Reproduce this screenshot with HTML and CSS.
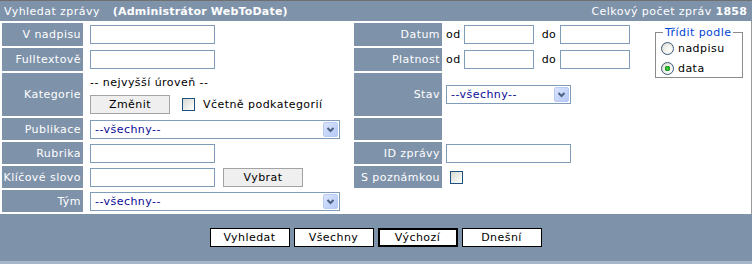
FILE: index.html
```html
<!DOCTYPE html>
<html lang="cs">
<head>
<meta charset="utf-8">
<title>Vyhledat zprávy</title>
<link rel="stylesheet" href="styles.css">
</head>
<body>
<div class="panel">
  <div class="head">
    <div class="head-title">Vyhledat zprávy<b class="head-user">(Administrátor WebToDate)</b></div>
    <div class="head-count">Celkový počet zpráv <b>1858</b></div>
  </div>
  <form class="grid">
    <div class="lbl">V nadpisu</div>
    <div class="cell"><input class="txt w125" type="text"></div>
    <div class="lbl">Datum</div>
    <div class="cell cell-r">od<input class="txt w70 od" type="text"><span class="do">do</span><input class="txt w70 od2" type="text"></div>
    <fieldset class="sort">
      <legend>Třídit podle</legend>
      <label class="opt"><input class="rad" type="radio" name="sort">nadpisu</label>
      <label class="opt"><input class="rad" type="radio" name="sort" checked>data</label>
    </fieldset>

    <div class="lbl">Fulltextově</div>
    <div class="cell"><input class="txt w125" type="text"></div>
    <div class="lbl">Platnost</div>
    <div class="cell cell-r">od<input class="txt w70 od" type="text"><span class="do">do</span><input class="txt w70 od2" type="text"></div>

    <div class="lbl">Kategorie</div>
    <div class="cell cell-kat">
      <div class="lvl">-- nejvyšší úroveň --</div>
      <div class="katrow">
        <button type="button" class="btn">Změnit</button>
        <label class="incl"><input class="chk" type="checkbox">Včetně podkategorií</label>
      </div>
    </div>
    <div class="lbl">Stav</div>
    <div class="cell cell-r"><select class="sel w125"><option>--všechny--</option></select></div>

    <div class="lbl">Publikace</div>
    <div class="cell"><select class="sel w250"><option>--všechny--</option></select></div>
    <div class="lbl"></div>
    <div class="cell cell-r wide"></div>

    <div class="lbl">Rubrika</div>
    <div class="cell"><input class="txt w125" type="text"></div>
    <div class="lbl">ID zprávy</div>
    <div class="cell cell-r wide"><input class="txt w125" type="text"></div>

    <div class="lbl">Klíčové slovo</div>
    <div class="cell"><input class="txt w125" type="text"><button type="button" class="btn pick">Vybrat</button></div>
    <div class="lbl">S poznámkou</div>
    <div class="cell cell-r wide"><input class="chk note" type="checkbox"></div>

    <div class="lbl">Tým</div>
    <div class="cell"><select class="sel w250"><option>--všechny--</option></select></div>
  </form>
  <div class="foot">
    <button type="button" class="fbtn">Vyhledat</button>
    <button type="button" class="fbtn">Všechny</button>
    <button type="button" class="fbtn fbtn-def">Výchozí</button>
    <button type="button" class="fbtn">Dnešní</button>
  </div>
  <div class="strip"></div>
</div>
</body>
</html>
```
FILE: styles.css
```css
* { box-sizing: border-box; }
html, body { margin: 0; padding: 0; background: #fff; }
body {
  font-family: "DejaVu Sans", Verdana, sans-serif;
  font-size: 11px;
  line-height: 13px;
  letter-spacing: 0.45px;
  color: #000;
}
input, select, button { letter-spacing: inherit; }
.panel { width: 752px; }

.head {
  display: flex;
  justify-content: space-between;
  align-items: center;
  height: 21px;
  border-top: 1px solid #6f6f6f;
  background: #7e92aa;
  color: #fff;
  padding: 0 5px 0 4px;
}
.head-user { margin-left: 13px; letter-spacing: 0.2px; }
.head-count b { letter-spacing: 0.2px; }

.grid {
  margin: 0;
  display: grid;
  grid-template-columns: 81px 267px 88px 196px 1fr;
  grid-template-rows: 23px 23px 43px 22px 22px 22px 22px;
  gap: 2px;
  padding: 2px 2px 2px 2px;
  border-right: 1px solid #9a9a9a;
}
.lbl {
  background: #7e92aa;
  color: #fff;
  display: flex;
  align-items: center;
  justify-content: flex-end;
  padding-right: 2px;
  white-space: nowrap;
}
.cell {
  display: flex;
  align-items: center;
  padding-left: 5px;
  white-space: nowrap;
}
.cell-r { padding-left: 2px; }
.wide { grid-column: span 2; }

.txt {
  height: 19px;
  border: 1px solid #7f9db9;
  background: #fff;
  margin: 0;
  padding: 0 2px;
  font: inherit;
}
.w125 { width: 125px; }
.w70 { width: 70px; }
.od { margin-left: 3px; }
.do { margin-left: 8px; }
.od2 { margin-left: 4px; }

.sel {
  appearance: none;
  -webkit-appearance: none;
  height: 19px;
  margin: 0;
  border: 1px solid #7f9db9;
  border-radius: 0;
  padding: 0 0 0 4px;
  font: inherit;
  color: #0b0b96;
  background: #fff url("data:image/svg+xml,%3Csvg xmlns='http://www.w3.org/2000/svg' width='15' height='15'%3E%3Cdefs%3E%3ClinearGradient id='g' x1='0' y1='0' x2='1' y2='1'%3E%3Cstop offset='0' stop-color='%23dbe5fd'/%3E%3Cstop offset='1' stop-color='%23b4c8f6'/%3E%3C/linearGradient%3E%3C/defs%3E%3Crect x='0.5' y='0.5' width='14' height='14' rx='1.5' fill='url(%23g)' stroke='%23b9cbf3'/%3E%3Cpath d='M4.5 6l3 3 3-3' fill='none' stroke='%234d6185' stroke-width='2'/%3E%3C/svg%3E") no-repeat right 1px center;
}
.w250 { width: 250px; }

.btn {
  width: 80px;
  height: 19px;
  margin: 0;
  padding: 0;
  border: 1px solid #a3a3a3;
  background: #efefef;
  font: inherit;
  color: #000;
}
.pick { margin-left: 8px; }

.cell-kat {
  flex-direction: column;
  align-items: flex-start;
  justify-content: flex-start;
  padding-top: 3px;
}
.katrow {
  display: flex;
  align-items: center;
  margin-top: 6px;
}
.incl {
  display: flex;
  align-items: center;
  margin-left: 12px;
}
.chk {
  appearance: none;
  -webkit-appearance: none;
  width: 13px;
  height: 13px;
  margin: 0 8px 0 0;
  border: 1px solid #1c5180;
  border-radius: 0;
  background: linear-gradient(135deg, #d8d8d2, #ffffff);
}
.note { margin-left: 4px; }

.sort {
  grid-column: 5;
  grid-row: 1 / span 3;
  align-self: start;
  margin: 3px 0 0 13px;
  width: 88px;
  height: 52px;
  border: 1px solid #8c8c8c;
  padding: 3px 0 0 5px;
  display: flex;
  flex-direction: column;
  gap: 7px;
}
.sort legend {
  color: #0046d5;
  margin-left: 2px;
  padding: 0 2px;
  line-height: 13px;
}
.opt {
  display: flex;
  align-items: center;
  height: 13px;
}
.rad {
  appearance: none;
  -webkit-appearance: none;
  width: 13px;
  height: 13px;
  margin: 0 4px 0 0;
  border: 1px solid #3d5a7a;
  border-radius: 50%;
  background: radial-gradient(circle at 65% 65%, #ffffff 0, #ececE6 55%, #c9c9c1 100%);
}
.rad:checked {
  background:
    radial-gradient(circle at 50% 50%, #54d654 0, #21a121 2px, #1b8f1b 2.6px, rgba(0,0,0,0) 3px),
    radial-gradient(circle at 65% 65%, #ffffff 0, #ececE6 55%, #c9c9c1 100%);
}

.foot {
  display: flex;
  justify-content: center;
  align-items: flex-start;
  gap: 4px;
  height: 47px;
  padding: 14px 1px 0 0;
  background: #7e92aa;
}
.fbtn {
  width: 80px;
  height: 19px;
  margin: 0;
  padding: 0;
  border: 1px solid #000;
  background: #fff;
  font: inherit;
  color: #000;
}
.fbtn-def { border-width: 2px; }
.strip { height: 3px; background: #a6b5c8; }
```
